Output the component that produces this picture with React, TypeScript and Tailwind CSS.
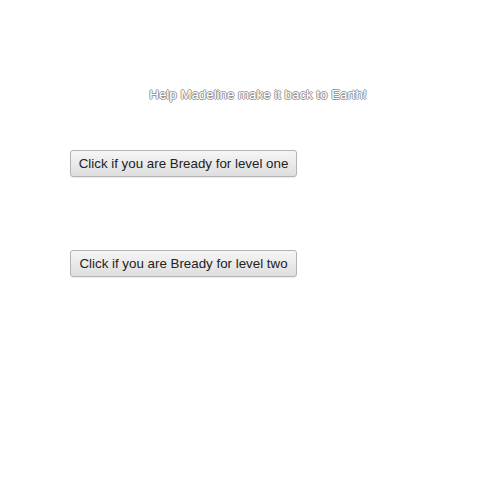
import React from 'react';

const LevelButton = ({ label }: { label: string }) => (
  <button className="h-[27px] w-[227px] rounded-[3px] border border-[#b4b4b4] bg-gradient-to-b from-[#f6f6f6] to-[#dedede] text-[13.33px] text-[#222] shadow-[0_1px_1px_rgba(0,0,0,0.08)] font-['Liberation_Sans',Arial,sans-serif]">
    {label}
  </button>
);

export default function App() {
  return (
    <div className="h-[500px] w-[500px] bg-white font-['Liberation_Sans',Arial,sans-serif]">
      <div className="pt-[87px] pl-[16px] text-center">
        <h1 className="text-[13.3px] font-normal leading-[16px] text-white [text-shadow:-1px_0_#999,1px_0_#999,0_-1px_#999,0_1px_#999]">
          Help Madeline make it back to Earth!
        </h1>
      </div>
      <div className="flex flex-col gap-[73px] pl-[70px] pt-[47px]">
        <LevelButton label="Click if you are Bready for level one" />
        <LevelButton label="Click if you are Bready for level two" />
      </div>
    </div>
  );
}
